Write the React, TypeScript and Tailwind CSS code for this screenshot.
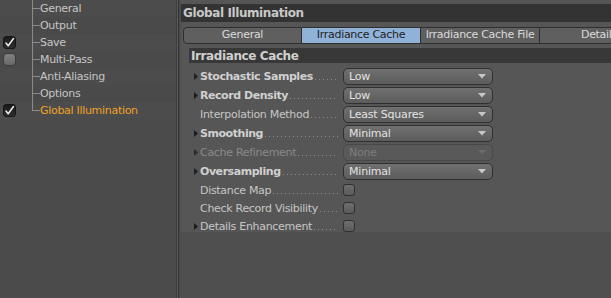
import React from "react";

const font = { fontFamily: '"DejaVu Sans", sans-serif' };

type TreeItem = { label: string; check?: "on" | "off"; active?: boolean };
const tree: TreeItem[] = [
  { label: "General" },
  { label: "Output" },
  { label: "Save", check: "on" },
  { label: "Multi-Pass", check: "off" },
  { label: "Anti-Aliasing" },
  { label: "Options" },
  { label: "Global Illumination", check: "on", active: true },
];

function LeftCheck({ state }: { state?: "on" | "off" }) {
  if (!state) return null;
  if (state === "on")
    return (
      <div className="w-[13px] h-[13px] rounded-[3px] bg-gradient-to-b from-[#1a1a1a] to-[#2e2e2e] border border-[#161616] flex items-center justify-center">
        <svg width="11" height="11" viewBox="0 0 11 11">
          <path d="M2 6 L4.2 8.8 L9.5 1.5" stroke="#eeeeee" strokeWidth="1.5" fill="none" strokeLinecap="round" strokeLinejoin="round" />
        </svg>
      </div>
    );
  return <div className="w-[13px] h-[13px] rounded-[4px] bg-gradient-to-b from-[#808080] to-[#6a6a6a] border border-[#3c3c3c]" />;
}

type Row =
  | { kind: "select"; label: string; value: string; bold?: boolean; tri?: boolean; disabled?: boolean }
  | { kind: "check"; label: string; tri?: boolean };

const rows: Row[] = [
  { kind: "select", label: "Stochastic Samples", value: "Low", bold: true, tri: true },
  { kind: "select", label: "Record Density", value: "Low", bold: true, tri: true },
  { kind: "select", label: "Interpolation Method", value: "Least Squares" },
  { kind: "select", label: "Smoothing", value: "Minimal", bold: true, tri: true },
  { kind: "select", label: "Cache Refinement", value: "None", tri: true, disabled: true },
  { kind: "select", label: "Oversampling", value: "Minimal", bold: true, tri: true },
  { kind: "check", label: "Distance Map" },
  { kind: "check", label: "Check Record Visibility" },
  { kind: "check", label: "Details Enhancement", tri: true },
];

function Tri({ dim }: { dim?: boolean }) {
  return (
    <svg width="4" height="7" viewBox="0 0 4 7">
      <path d="M0 0 L4 3.5 L0 7 Z" fill={dim ? "#2a2a2a" : "#1e1e1e"} />
    </svg>
  );
}

function Arrow({ dim }: { dim?: boolean }) {
  return (
    <svg width="8" height="5" viewBox="0 0 8 5">
      <path d="M0 0 L8 0 L4 4.5 Z" fill={dim ? "#6a6a6a" : "#c8c8c8"} />
    </svg>
  );
}

function Select({ value, disabled }: { value: string; disabled?: boolean }) {
  return (
    <div
      className={
        "w-[150px] shrink-0 h-[17px] rounded-[5px] border flex items-center justify-between pl-[5px] pr-[6px] text-[11px] tracking-[-0.2px] " +
        (disabled
          ? "border-[#484848] bg-[#595959] text-[#7e7e7e]"
          : "border-[#303030] bg-gradient-to-b from-[#707070] to-[#5c5c5c] text-[#e2e2e2]")
      }
    >
      <span className="leading-none whitespace-nowrap">{value}</span>
      <Arrow dim={disabled} />
    </div>
  );
}

function Check() {
  return <div className="w-[12px] h-[12px] shrink-0 rounded-[3px] border border-[#303030] bg-gradient-to-b from-[#6e6e6e] to-[#5a5a5a]" />;
}

export default function App() {
  return (
    <div className="w-[611px] h-[298px] flex overflow-hidden bg-[#4f4f4f]" style={font}>
      {/* left tree */}
      <div className="w-[176px] shrink-0 h-full bg-[#4b4b4b] flex flex-col">
        {tree.map((t, i) => (
          <div key={t.label} className={"h-[17px] flex items-center " + (i % 2 ? "bg-[#4a4a4a]" : "bg-[#4c4c4c]")}>
            <div className="w-[32px] shrink-0 pl-[3px] flex items-center">
              <LeftCheck state={t.check} />
            </div>
            <div className="w-[8px] shrink-0 h-full flex flex-col">
              <div className="h-[9px] border-l border-b border-[#8a8a8a]" />
              <div className={"flex-1 " + (i < tree.length - 1 ? "border-l border-[#8a8a8a]" : "")} />
            </div>
            <span
              className={
                "text-[11px] leading-none whitespace-nowrap tracking-[-0.3px] " + (t.active ? "text-[#f0a224]" : "text-[#c6c6c6]")
              }
            >
              {t.label}
            </span>
          </div>
        ))}
      </div>
      {/* divider */}
      <div className="w-[4px] shrink-0 h-full flex">
        <div className="w-[1px] bg-[#3c3c3c]" />
        <div className="w-[1px] bg-[#5a5a5a]" />
        <div className="w-[1px] bg-[#333333]" />
        <div className="w-[1px] bg-[#4a4a4a]" />
      </div>
      {/* right panel */}
      <div className="flex-1 min-w-0 h-full flex flex-col">
        <div className="ml-[1px] h-[232px] bg-[#565656] flex flex-col pt-[4px]">
          <div className="h-[18px] bg-[#333333] flex items-center pl-[2px] text-[12px] font-bold tracking-[-0.4px] text-[#c8c8c8] whitespace-nowrap">
            Global Illumination
          </div>
          <div className="mt-[5px] ml-[2px] h-[17px] flex text-[11px] tracking-[-0.3px]">
            {["General", "Irradiance Cache", "Irradiance Cache File", "Details"].map((t, i) => (
              <div
                key={t}
                className={
                  "w-[119px] shrink-0 h-full flex items-center justify-center border-y border-r border-[#2e2e2e] whitespace-nowrap " +
                  (i === 0 ? "border-l rounded-l-[4px] " : "") +
                  (i === 1 ? "bg-[#91b2d8] text-[#1e1e1e]" : "bg-[#5f5f5f] text-[#dadada]")
                }
              >
                {t}
              </div>
            ))}
          </div>
          <div className="mt-[4px] ml-[8px] h-[15px] bg-[#383838] flex items-center pl-[2px] text-[12px] font-bold tracking-[-0.4px] text-[#cfcfcf] whitespace-nowrap">
            Irradiance Cache
          </div>
          <div className="mt-[4px] flex flex-col">
            {rows.map((r) => {
              const isCheck = r.kind === "check";
              const disabled = r.kind === "select" && r.disabled;
              const bold = r.kind === "select" && r.bold;
              return (
                <div key={r.label} className={(isCheck ? "h-[18px]" : "h-[19px]") + " flex items-center"}>
                  <div className="w-[19px] shrink-0 pl-[13px] flex items-center">{r.tri && <Tri dim={disabled} />}</div>
                  <div className="w-[143px] shrink-0 flex items-end overflow-hidden whitespace-nowrap">
                    <span
                      className={
                        "shrink-0 text-[11px] leading-none " +
                        (bold ? "font-bold tracking-[-0.45px] " : "tracking-[-0.3px] ") +
                        (disabled ? "text-[#8a8a8a]" : bold ? "text-[#d0d0d0]" : "text-[#c6c6c6]")
                      }
                    >
                      {r.label}
                    </span>
                    <div className="flex-1 min-w-0 ml-[2px] mr-[5px] mb-[2px] h-[1px] bg-[linear-gradient(to_right,#8c8c8c_1px,transparent_1px)] bg-[length:4px_1px]" />
                  </div>
                  {r.kind === "select" ? <Select value={r.value} disabled={r.disabled} /> : <Check />}
                </div>
              );
            })}
          </div>
        </div>
      </div>
    </div>
  );
}
